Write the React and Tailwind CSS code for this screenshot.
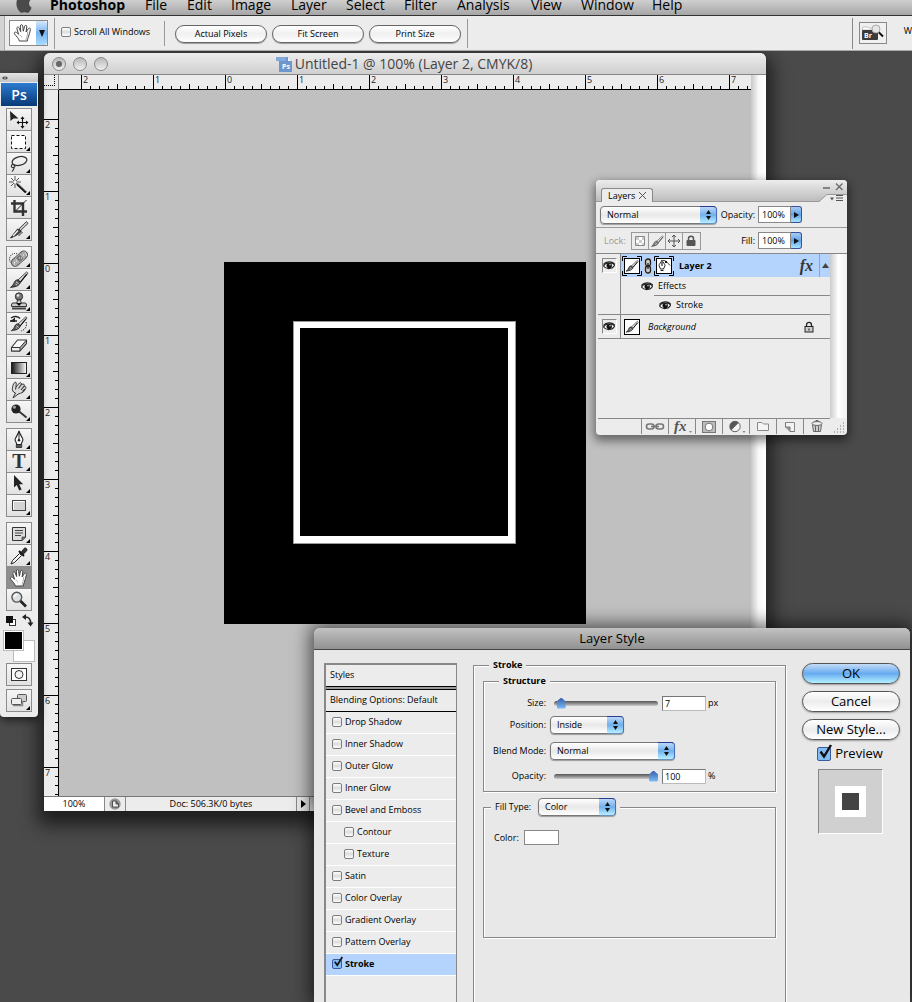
import { useState } from 'react'

const MENUS = [
  ['File', 'w-[42px]'],
  ['Edit', 'w-[44px]'],
  ['Image', 'w-[60px]'],
  ['Layer', 'w-[55px]'],
  ['Select', 'w-[58px]'],
  ['Filter', 'w-[53px]'],
  ['Analysis', 'w-[74px]'],
  ['View', 'w-[50px]'],
  ['Window', 'w-[71px]'],
  ['Help', 'w-[40px]'],
]

const STYLES = [
  { name: 'Drop Shadow' },
  { name: 'Inner Shadow' },
  { name: 'Outer Glow' },
  { name: 'Inner Glow' },
  { name: 'Bevel and Emboss' },
  { name: 'Contour', nested: true },
  { name: 'Texture', nested: true },
  { name: 'Satin' },
  { name: 'Color Overlay' },
  { name: 'Gradient Overlay' },
  { name: 'Pattern Overlay' },
  { name: 'Stroke' },
]

function HandShape() {
  return (
    <>
      <path
        d="M6.4 18 C5.8 15.6 3.4 13.4 1.4 10.8 C.8 9.4 2.4 8.5 3.5 9.4 L5.6 11.2 L3.8 5.6 C3.5 4 5.4 3.4 6.1 4.8 L7.7 8.6 L7.3 3 C7.3 1.4 9.4 1.2 9.7 2.8 L10.3 8.2 L11.6 3.2 C12 1.8 14 2.2 13.8 3.8 L13.1 9 L15.4 5.6 C16.2 4.4 17.9 5.2 17.4 6.7 C16.4 9.5 16.4 12 15.2 14.6 C14.6 16 14.4 16.6 14.4 18 Z"
        fill="#fff" stroke="#444" strokeWidth="1"
      />
      <path d="M14.8 8.5 C14.5 12 13.6 15 12.8 17.2 M6.5 12 C7.8 12.4 8.6 13.2 8.8 14.4" fill="none" stroke="#aaa" strokeWidth="1" />
    </>
  )
}

function BrushShape() {
  return (
    <>
      <path d="M17.5 2 L19 3.2 L11.5 12 L9 10 Z" fill="#ddd" stroke="#222" strokeWidth="0.8" />
      <path d="M17.8 4.2 L11.6 11.8" stroke="#111" strokeWidth="1.2" />
      <path d="M8.8 9.8 L11.6 12.2 L10.4 14.2 C8.2 17 4.4 16.8 1.5 17.5 C3.8 15.6 4.4 14.6 5.4 12.2 C6 10.8 7.4 9.8 8.8 9.8 Z" fill="#5a5a5a" stroke="#111" strokeWidth="0.8" />
      <path d="M7 11.8 L9.6 13.8 M6.5 14 L8 15" stroke="#ddd" strokeWidth="1" />
    </>
  )
}

const TOOL_ICONS = {
  move: (
    <>
      <path d="M1 1 L1.5 11 L4.5 8.6 L9.5 8.6 Z" fill="#222" />
      <path d="M13.5 7.5 V17.5 M8.5 12.5 H18.5" stroke="#111" strokeWidth="1.1" />
      <path d="M13.5 6.3 L11.5 9 H15.5 Z M13.5 18.7 L11.5 16 H15.5 Z M7.5 12.5 L10 10.5 V14.5 Z M19.5 12.5 L17 10.5 V14.5 Z" fill="#111" />
    </>
  ),
  marquee: <rect x="2.5" y="3.5" width="14" height="13" fill="#fff" stroke="#111" strokeDasharray="3 2" />,
  lasso: (
    <>
      <ellipse cx="10.5" cy="7" rx="7.5" ry="4.3" transform="rotate(-14 10.5 7)" fill="none" stroke="#333" strokeWidth="1.3" />
      <path d="M4 10 C1.5 11 2 13.8 4.4 13.6 C6.8 13.2 6 10.6 4.2 11 M5 13.5 C5.5 15 4 16 3 17.5" fill="none" stroke="#333" strokeWidth="1.2" />
    </>
  ),
  wand: (
    <>
      <path d="M6 0 V12 M0 6 H12 M2 2 L10 10 M10 2 L2 10" stroke="#555" strokeWidth="1" />
      <path d="M8 8 L17 16.5" stroke="#111" strokeWidth="2.4" />
      <path d="M9 7.8 L17 15.2" stroke="#aaa" strokeWidth="0.7" />
      <circle cx="6" cy="6" r="1.5" fill="#fff" />
    </>
  ),
  crop: (
    <>
      <path d="M5.5 2 V13.5 H18 M2 5.5 H14 V18" fill="none" stroke="#333" strokeWidth="2.4" />
      <path d="M6.5 13 L17.5 2" stroke="#222" strokeWidth="1" />
    </>
  ),
  slice: (
    <>
      <path d="M17.5 1.5 L19 3.5 L11.5 10.5 L9.8 9 Z" fill="#ccc" stroke="#222" strokeWidth="0.8" />
      <path d="M8.5 9 L12.5 11.2 C9 15 5 16.5 1.5 18 Z" fill="#444" stroke="#111" strokeWidth="0.7" />
      <path d="M9 10.5 L4 16" stroke="#eee" strokeWidth="1.4" />
      <path d="M13.5 12 L9.5 16" stroke="#111" strokeWidth="0.9" />
    </>
  ),
  heal: (
    <>
      <circle cx="6" cy="11" r="5.5" fill="none" stroke="#111" strokeDasharray="1 1.2" />
      <rect x="1" y="6.5" width="19" height="7.5" rx="3.7" transform="rotate(-42 11 10.5)" fill="#aaa" stroke="#555" />
      <rect x="8" y="7" width="6" height="6.5" transform="rotate(-42 11 10.5)" fill="#777" stroke="#ddd" strokeWidth="0.5" />
      <path d="M5 14.5 h1 M7 13 h1 M14 7 h1 M16 5 h1 M10 10 h1 M12 10 h1 M5 16 h1 M17 7 h1" stroke="#fff" />
    </>
  ),
  brush: <BrushShape />,
  stamp: (
    <>
      <circle cx="10" cy="4.5" r="3.7" fill="#777" stroke="#333" />
      <path d="M8.5 8 H11.5 L12.2 11 H16 Q17.5 11 17.5 13 V14.5 H2.5 V13 Q2.5 11 4 11 H7.8 Z" fill="#ccc" stroke="#333" />
      <path d="M7 11 H13 L10 14 Z" fill="#111" />
      <path d="M3 16.5 H17" stroke="#444" strokeWidth="2" />
      <circle cx="9" cy="3.5" r="1.3" fill="#eee" />
    </>
  ),
  history: (
    <>
      <g transform="translate(1 1) scale(.9)"><BrushShape /></g>
      <path d="M2 4 C5 1.8 9 2 11 4.5 M1 7 H8" fill="none" stroke="#222" strokeWidth="1.3" />
      <path d="M1 7.5 L6 3.5 L6 8 Z" fill="#222" />
      <path d="M17 8 C18.5 12 16 16 12 17" fill="none" stroke="#222" strokeDasharray="1.5 1.2" />
    </>
  ),
  eraser: (
    <>
      <path d="M8.5 4 H17.5 V7.5 L11 15 H2.5 V11.5 Z" fill="#fafafa" stroke="#333" strokeWidth="1.1" strokeLinejoin="round" />
      <path d="M2.5 11.5 H11 L17.5 4 V7.5 L11 15 Z" fill="#aaa" stroke="#333" strokeWidth="1" strokeLinejoin="round" />
      <path d="M2.5 11.5 H11 V15 H2.5 Z" fill="#eee" stroke="#333" strokeWidth="1" />
    </>
  ),
  gradient: (
    <>
      <defs>
        <linearGradient id="toolGradient">
          <stop offset="0" stopColor="#111" />
          <stop offset="1" stopColor="#fff" />
        </linearGradient>
      </defs>
      <rect x="2.5" y="4.5" width="15" height="11" fill="url(#toolGradient)" stroke="#222" />
    </>
  ),
  smudge: (
    <>
      <path d="M4 18 L6.5 13 C4 12.5 2.8 10 3.5 7.5 C4 4.5 5 2.5 6.5 2 C8 3 6.8 5.5 7 7 L10.5 3 C12 2.2 13 3.3 12.2 4.7 L14 4 C15.4 4 15.6 5.4 14.9 6.4 L16.2 6.3 C17.4 7 17 8.3 16.2 9.3 C15.5 11 13.8 13 11.5 13.2 L9 14.2 Z" fill="#ddd" stroke="#333" strokeWidth="1" />
      <path d="M12.2 4.7 L9.5 8.5 M14.9 6.4 L12 10 M16 9 L13.5 11.5 M7 7 L6.5 9.5" stroke="#333" strokeWidth="1.1" />
    </>
  ),
  dodge: (
    <>
      <path d="M9.5 9 L17.5 15.5" stroke="#333" strokeWidth="1.8" />
      <circle cx="7" cy="7" r="4.6" fill="#222" />
      <circle cx="5.4" cy="5.2" r="1.6" fill="#999" />
    </>
  ),
  pen: (
    <>
      <path d="M10 1 C11 5 14 8 14 10 L12 14.5 H8 L6 10 C6 8 9 5 10 1 Z" fill="#fff" stroke="#222" strokeWidth="1.1" />
      <path d="M10 3 V10" stroke="#222" />
      <circle cx="10" cy="10.3" r="1.3" fill="#222" />
      <path d="M7.3 14.5 H12.7 V17.5 H7.3 Z" fill="#555" stroke="#222" strokeWidth="0.8" />
    </>
  ),
  type: <text x="10" y="16" textAnchor="middle" className="fill-[#333] font-['Liberation_Serif',serif] text-[20px] font-bold">T</text>,
  select: <path d="M5 1 L5 13.500 L7.8 11 L10.2 16.5 L12.6 15.5 L10.2 10.2 H14.2 Z" fill="#222" />,
  shape: (
    <>
      <rect x="3.5" y="4.5" width="13" height="10" fill="#d4d4d4" stroke="#444" />
      <path d="M4.5 13.5 V5.5 H15.5" fill="none" stroke="#fff" />
    </>
  ),
  notes: (
    <>
      <path d="M3.5 3.5 H16.5 V13 L13 16.5 H3.5 Z" fill="#ddd" stroke="#333" />
      <path d="M16.5 13 H13 V16.5 Z" fill="#888" stroke="#333" strokeWidth="0.7" />
      <path d="M6 6.5 H14 M6 9 H14 M6 11.5 H12" stroke="#444" />
    </>
  ),
  dropper: (
    <>
      <path d="M2 18 L3.5 14.5 L10.5 7.5 L12.5 9.5 L5.5 16.5 Z" fill="#f4f4f4" stroke="#222" strokeWidth="1" />
      <path d="M10 5 L15 10" stroke="#111" strokeWidth="2" />
      <path d="M12 6.5 L15 2.5 C16.5 1 19 3 17.6 5 L14 8.5 Z" fill="#333" stroke="#111" strokeWidth="0.8" />
    </>
  ),
  hand: <HandShape />,
  zoom: (
    <>
      <path d="M11 10.5 L17 16.5" stroke="#222" strokeWidth="2.6" />
      <circle cx="7.8" cy="7.2" r="4.9" fill="#dde1e3" stroke="#555" strokeWidth="1.4" />
      <path d="M5.2 7 C5.6 5.3 6.8 4.5 8.2 4.5" fill="none" stroke="#fff" strokeWidth="1.4" />
    </>
  ),
  mask: (
    <>
      <rect x="2.5" y="3.5" width="15" height="12" fill="#fff" stroke="#333" />
      <circle cx="10" cy="9.5" r="4" fill="#f4f4f4" stroke="#333" />
    </>
  ),
  screen: (
    <>
      <rect x="8.5" y="3.5" width="9" height="7" rx="1" fill="#ccc" stroke="#555" />
      <path d="M4 14.500 H13.500 V10" fill="none" stroke="#888" strokeWidth="1.5" />
      <rect x="2.5" y="7.5" width="10" height="6" rx="1" fill="#f0f0f0" stroke="#555" />
    </>
  ),
}

const TOOL_GROUPS = [
  [['move'], ['marquee', 1], ['lasso', 1], ['wand', 1], ['crop'], ['slice', 1]],
  [['heal', 1], ['brush', 1], ['stamp', 1], ['history', 1], ['eraser', 1], ['gradient', 1], ['smudge', 1], ['dodge', 1]],
  [['pen', 1], ['type', 1], ['select', 1], ['shape', 1]],
  [['notes', 1], ['dropper', 1], ['hand'], ['zoom']],
]

function ToolGroup({ tools, active, onPick }) {
  return (
    <div className="w-[26px] border-x border-t border-[#8c8c8c]">
      {tools.map(([name, more]) => (
        <button
          key={name}
          type="button"
          aria-label={name}
          onClick={() => onPick(name)}
          className={`relative flex h-[22px] w-full items-center justify-center border-b border-[#8c8c8c] ${
            active === name ? 'bg-[#8e8e8e]' : 'bg-linear-to-b from-[#f6f6f6] to-[#e2e2e2]'
          }`}
        >
          <svg viewBox="0 0 20 20" className="size-5" fill="none">{TOOL_ICONS[name]}</svg>
          {more && (
            <svg viewBox="0 0 4 4" className="absolute right-px bottom-px size-1"><path d="M4 0 V4 H0 Z" fill="#000" /></svg>
          )}
        </button>
      ))}
    </div>
  )
}

function Toolbox() {
  const [active, setActive] = useState('hand')

  return (
    <aside className="absolute top-[22px] left-0 flex w-[38px] flex-col items-center rounded-b-sm bg-[#ececec] pb-[5px] shadow-[1px_3px_8px_#0009]">
      <div className="flex h-[9px] w-full items-center bg-linear-to-b from-[#e4e4e4] to-[#c4c4c4] pl-0.5">
        <svg viewBox="0 0 6 4" className="h-1 w-1.5"><path d="M2.5 0 V4 L0 2 Z M3.5 0 V4 L6 2 Z" fill="#444" /></svg>
      </div>
      <div className="mt-px mb-0.5 flex h-[23px] w-9 items-center justify-center bg-linear-to-b from-[#2c7bd0] to-[#083a78] text-sm font-semibold text-white">
        Ps
      </div>
      <div className="flex flex-col gap-[5px]">
        {TOOL_GROUPS.map((tools) => (
          <ToolGroup key={tools[0][0]} tools={tools} active={active} onPick={setActive} />
        ))}
      </div>
      <svg viewBox="0 0 36 52" className="h-[52px] w-9">
        <rect x="8.5" y="8.5" width="6" height="6" fill="#fff" stroke="#333" />
        <rect x="5" y="5" width="7" height="7" fill="#111" />
        <path d="M23 6 C28 5.500 30 8 29.500 13" fill="none" stroke="#222" strokeWidth="1.500" />
        <path d="M21 6 L25 3 V9 Z M29.500 15.500 L26.500 11.500 H32.500 Z" fill="#222" />
        <rect x="12.5" y="29.500" width="21" height="21" fill="#fff" stroke="#bbb" />
        <rect x="2.500" y="19.500" width="20" height="20" fill="#fff" stroke="#bbb" />
        <rect x="4" y="21" width="17" height="17" fill="#000" />
      </svg>
      <div className="flex flex-col gap-[3px]">
        <ToolGroup tools={[['mask']]} active={active} onPick={setActive} />
        <ToolGroup tools={[['screen', 1]]} active={active} onPick={setActive} />
      </div>
    </aside>
  )
}

function Check({ checked, onChange, large = false }) {
  return (
    <span className={`relative inline-flex shrink-0 ${large ? 'size-[14px]' : 'size-[10px]'}`}>
      <input
        type="checkbox"
        checked={checked}
        onChange={onChange}
        className="size-full appearance-none rounded-[2px] border border-[#7d7d7d] bg-linear-to-b from-white via-[#dcdcdc] to-white checked:border-[#3c5a9c] checked:bg-none checked:bg-[#83bdf5]"
      />
      {checked && (
        <svg viewBox="0 0 14 14" className="pointer-events-none absolute -top-0.5 left-px size-full overflow-visible">
          <path d="M2.5 6.5 L6 11.5 L13 0" fill="none" stroke="#111" strokeWidth="2.4" />
        </svg>
      )}
    </span>
  )
}

function Dropdown({ id, label, options, className }) {
  return (
    <span className={`relative inline-flex h-[18px] ${className}`}>
      <select
        id={id}
        aria-label={label}
        className="h-full w-full appearance-none rounded-[4px] border border-[#777] bg-linear-to-b from-white via-[#e8e8e8] to-white pl-1.5 text-[9px] leading-4 shadow-[0_1px_1px_#0005] outline-none"
      >
        {options.map((o) => <option key={o}>{o}</option>)}
      </select>
      <span className="pointer-events-none absolute inset-y-0 right-0 flex w-[17px] items-center justify-center rounded-r-[4px] border border-l-0 border-t-[#2b3a94] border-r-[#4a6fb8] border-b-[#6a8fc0] bg-linear-to-b from-[#bcd8f8] via-[#6fb0ee] to-[#b8f0ff]">
        <svg viewBox="0 0 5 10" className="h-2.5 w-[5px]"><path d="M2.5 0 L5 4 H0 Z M2.5 10 L0 6 H5 Z" fill="#111" /></svg>
      </span>
    </span>
  )
}

function PercentField({ label }) {
  return (
    <label className="flex items-center justify-end">
      <span className="mr-[3px]">{label}</span>
      <input defaultValue="100%" className="h-[17px] w-[33px] border border-[#888] bg-white px-[3px] text-[9px] outline-none" />
      <span className="flex h-[17px] w-[11px] items-center justify-center rounded-r-[3px] border border-l-0 border-[#3a4fa0] bg-linear-to-b from-[#a8ccf4] via-[#5fa4ea] to-[#a8e4ff]">
        <svg viewBox="0 0 5 6" className="h-1.5 w-[5px]"><path d="M0 0 L5 3 L0 6 Z" fill="#111" /></svg>
      </span>
    </label>
  )
}

function MenuBar() {
  return (
    <nav className="flex h-4 shrink-0 border-b border-[#333] bg-linear-to-b from-[#cfcfcf] to-[#a6a6a6] pl-[15px] text-sm leading-[10px]">
      <svg viewBox="0 0 18 14" className="h-3.5 w-[35px] shrink-0" preserveAspectRatio="xMinYMin">
        <path d="M2 0 C.5 4 2 9 5 12 C6.5 13.6 8 12.4 9.3 12.2 C11 12 12 13.6 13.6 12.4 C15 11.4 16 9.5 16.6 7.6 C13.5 6 13.5 2 15.5 0 Z" fill="#4a4a4a" />
      </svg>
      <button type="button" className="flex w-[95px] shrink-0 font-bold">Photoshop</button>
      {MENUS.map(([name, width]) => (
        <button key={name} type="button" className={`flex shrink-0 font-medium ${width}`}>{name}</button>
      ))}
    </nav>
  )
}

function OptionsBar() {
  const [scrollAll, setScrollAll] = useState(false)

  return (
    <div className="flex h-[35px] shrink-0 items-center overflow-hidden border-b border-[#aaa] bg-[#ececec] text-[9px]">
      <span className="h-full w-[5px] border-r border-[#aaa] bg-[#d4d4d4]" />
      <button type="button" aria-label="Hand tool" className="ml-1 flex h-[26px] w-[39px] shrink-0 border border-[#888] bg-white">
        <svg viewBox="0 0 20 20" className="mx-[3px] mt-0.5 size-5"><HandShape /></svg>
        <span className="flex h-full flex-1 items-center justify-center rounded-r-[3px] bg-linear-to-b from-[#d5e8fb] via-[#77b4f0] to-[#a9dcff]">
          <svg viewBox="0 0 6 7" className="h-[7px] w-1.5"><path d="M0 0 H6 L3 7 Z" fill="#111" /></svg>
        </span>
      </button>
      <span className="ml-1.5 h-[31px] w-px bg-[#999]" />
      <label className="ml-1.5 flex w-[103px] shrink-0 items-center gap-[3px] pb-0.5">
        <Check checked={scrollAll} onChange={() => setScrollAll(!scrollAll)} />
        Scroll All Windows
      </label>
      <span className="h-[25px] w-px bg-[#999]" />
      <div className="ml-2.5 flex gap-[5px] pt-0.5">
        {['Actual Pixels', 'Fit Screen', 'Print Size'].map((name) => (
          <button key={name} type="button" className="h-[18px] w-[92px] rounded-full border border-[#666] bg-linear-to-b from-white via-[#f0f0f0] to-white leading-4 shadow-[0_1px_1px_#0005]">
            {name}
          </button>
        ))}
      </div>
      <span className="ml-1.5 h-[29px] w-px bg-[#999]" />
      <span className="ml-auto h-[31px] w-px bg-[#888]" />
      <button type="button" aria-label="Bridge" className="mx-1.5 flex h-[22px] w-7 shrink-0 items-center justify-center border border-[#888] bg-[#f0f0f0]">
        <svg viewBox="0 0 24 18" className="h-[18px] w-6">
          <path d="M1 6 L2 3 H7 L8 4 H14 V6 Z" fill="#fff" stroke="#aaa" strokeWidth="0.7" />
          <rect x="1" y="6" width="16" height="10" rx="1" fill="#3a3a3a" />
          <text x="3" y="14" className="fill-white text-[7px] font-bold">Br</text>
          <path d="M17.500 8 L22 12.500" stroke="#111" strokeWidth="2" />
          <circle cx="15" cy="5" r="4" fill="#e6e6e6" stroke="#aaa" />
        </svg>
      </button>
      <span className="ml-[11px] shrink-0 pb-1">W</span>
    </div>
  )
}

// 72px to the inch, eight ticks per inch
function Ruler({ vertical = false, origin, from, to }) {
  const marks = []
  for (let i = from * 8; i <= to * 8 + 4; i++) {
    const at = origin + i * 9
    const size = i % 8 === 0 ? 15 : i % 4 === 0 ? 6 : 4
    if (at < 0) continue
    marks.push(
      vertical
        ? <path key={i} d={`M${15 - size} ${at + 0.5} H15`} />
        : <path key={i} d={`M${at + 0.5} ${15 - size} V15`} />
    )
  }
  const labels = []
  for (let n = from; n <= to; n++) {
    const at = origin + n * 72
    labels.push(
      <text key={n} x={vertical ? 1 : at + 2} y={vertical ? at + 9 : 8} className="fill-[#222] text-[9px] font-medium">
        {Math.abs(n)}
      </text>
    )
  }
  return (
    <svg className={vertical ? 'h-full w-[15px] shrink-0 border-r border-black bg-[#ececec]' : 'h-[15px] min-w-0 flex-1 overflow-visible border-b border-black bg-[#ececec]'}>
      <g stroke="#000" strokeWidth="1">{marks}</g>
      {labels}
    </svg>
  )
}

function DocumentWindow() {
  return (
    <section className="absolute top-0.5 right-[146px] bottom-[191px] left-11 flex flex-col overflow-hidden rounded-t-md bg-[#c0c0c0] shadow-[0_8px_18px_6px_#0009]">
      <header className="relative flex h-[22px] shrink-0 items-center justify-center border-b border-[#888] bg-linear-to-b from-[#ededed] to-[#cfcfcf] pr-0.5 text-sm text-[#444]">
        <div className="absolute left-2 flex gap-[7px]">
          {['Close', 'Minimize', 'Zoom'].map((name, i) => (
            <button key={name} type="button" aria-label={name} className="flex size-3.5 items-center justify-center rounded-full border border-[#888] bg-linear-to-b from-[#b8b8b8] to-[#f0f0f0]">
              {i === 0 && <span className="size-1.5 rounded-full bg-[#666]" />}
            </button>
          ))}
        </div>
        <svg viewBox="0 0 16 16" className="mr-[3px] size-4">
          <path d="M3 1 H12 L16 5 V16 H3 Z" fill="#6f96cc" />
          <path d="M12 1 V5 H16 Z" fill="#f3f6fb" />
          <rect x="0" y="1" width="10" height="4" fill="#83a9da" />
          <text x="6" y="13" className="fill-white text-[7px] font-bold">Ps</text>
        </svg>
        Untitled-1 @ 100% (Layer 2, CMYK/8)
      </header>

      <div className="flex min-h-0 flex-1">
        <div className="flex min-w-0 flex-1 flex-col">
          <div className="flex h-[15px] shrink-0 overflow-hidden">
            <div className="h-[15px] w-[15px] border-r border-b border-[#888] bg-[#ececec] pr-[3px] pb-[3px]">
              <div className="h-full w-full border-r border-b border-dotted border-black" />
            </div>
            <Ruler origin={166} from={-2} to={7} />
          </div>
          <div className="flex min-h-0 flex-1 overflow-hidden">
            <Ruler vertical origin={173} from={-2} to={7} />
            <div className="min-w-0 flex-1 pt-[172px] pl-[165px]">
              <div className="size-[362px] bg-black pt-[59px] pl-[69px]">
                <div className="size-[223px] border border-[#999] bg-white pt-1.5 pr-[7px] pb-[7px] pl-1.5">
                  <div className="h-full w-full bg-black" />
                </div>
              </div>
            </div>
          </div>
        </div>
        <div className="w-[15px] bg-linear-to-r from-[#c8c8c8] via-[#f8f8f8] to-white" />
      </div>

      <footer className="flex h-[15px] shrink-0 border-t border-[#777] bg-[#ececec] text-[9px] leading-[13px]">
        <span className="w-[61px] border-r border-[#888] bg-white text-center">100%</span>
        <span className="flex w-[21px] items-center justify-center border-r border-[#888]">
          <svg viewBox="0 0 12 12" className="size-3">
            <circle cx="6" cy="6" r="5.7" fill="#999" />
            <path d="M3.5 3 H7 L9.5 6 V9 H3.5 Z M7 3 V6 H9.5" fill="#eee" stroke="#333" strokeWidth="0.8" />
          </svg>
        </span>
        <span className="w-[170px] text-center">Doc: 506.3K/0 bytes</span>
        <button type="button" aria-label="Status menu" className="flex w-[14px] items-center justify-center border-x border-[#888]">
          <svg viewBox="0 0 5 8" className="h-2 w-[5px]"><path d="M0 0 L5 4 L0 8 Z" fill="#000" /></svg>
        </button>
        <span className="flex-1 bg-linear-to-b from-[#ccc] to-white" />
      </footer>
    </section>
  )
}

function Eye() {
  return (
    <svg viewBox="0 0 12 9" className="h-[9px] w-3">
      <path d="M.5 5 C2.5 1.5 9 1 11.6 4 C9.5 8.6 3 8.600 .5 5 Z" fill="#fff" stroke="#222" strokeWidth="1.1" />
      <path d="M.3 3.5 C3 0 9 0 11.7 3" fill="none" stroke="#222" strokeWidth="1.200" />
      <circle cx="6.2" cy="4.6" r="2.700" fill="#111" />
      <circle cx="7" cy="3.8" r="0.7" fill="#fff" />
    </svg>
  )
}

function LayerIcon({ pen = false, selected = false }) {
  return (
    <svg viewBox="0 0 20 20" className="size-5 shrink-0">
      {selected && <path d="M.5 5 V.5 H5 M15 .5 H19.5 V5 M19.5 15 V19.5 H15 M5 19.5 H.5 V15" fill="none" stroke="#000" />}
      <rect x="2.5" y="2.5" width="15" height="15" fill="#fff" stroke="#000" />
      {pen ? (
        <>
          <path d="M8 4 C8.8 6.500 11 8 11 9.5 L9.5 13 H6.5 L5 9.500 C5 8 7.200 6.500 8 4 Z" fill="#fff" stroke="#222" />
          <path d="M8 6 V10 M6.500 14.500 H9.500" stroke="#222" strokeWidth="1.200" />
          <path d="M9 4.500 C11 4 13 6 16 9.500" fill="none" stroke="#222" />
          <rect x="11" y="5" width="2" height="2" fill="#111" />
        </>
      ) : (
        <g transform="translate(3 3) scale(.7)"><BrushShape /></g>
      )}
    </svg>
  )
}

function LockIcon({ className }) {
  return (
    <svg viewBox="0 0 10 12" className={className}>
      <path d="M2.5 6 V4 C2.5 .5 7.5 .5 7.5 4 V6" fill="none" stroke="#222" strokeWidth="1.3" />
      <rect x="1" y="5.5" width="8" height="5.5" fill="#ccc" stroke="#222" />
      <path d="M5 7.5 V9.5" stroke="#111" />
    </svg>
  )
}

const LOCKS = [
  <g key="px"><path d="M3.5 3.5 H12.5 V12.5 H3.5 Z" fill="#fff" stroke="#888" /><path d="M4 4 h3 v3 h-3 Z M10 4 h2 v3 h-2 Z M7 7 h3 v3 h-3 Z M4 10 h3 v2 h-3 Z M10 10 h2 v2 h-2 Z" fill="#ccc" /></g>,
  <g key="paint" transform="translate(1.5 1.5) scale(.68)" opacity=".8"><BrushShape /></g>,
  <path key="move" d="M8 2 V14 M2 8 H14 M6 4 L8 2 L10 4 M6 12 L8 14 L10 12 M4 6 L2 8 L4 10 M12 6 L14 8 L12 10" fill="none" stroke="#555" />,
  <g key="all"><path d="M5.5 8 V5.5 C5.5 2.5 10.5 2.5 10.5 5.5 V8" fill="none" stroke="#555" strokeWidth="1.5" /><rect x="3.5" y="7" width="9" height="6" rx="1" fill="#555" /></g>,
]

const LAYER_ACTIONS = [
  ['Link', <g key="i" fill="none" stroke="#777" strokeWidth="1.6"><rect x="1.500" y="5" width="7.500" height="5" rx="2.5" /><rect x="11" y="5" width="7.500" height="5" rx="2.5" /><path d="M6 7.500 H14" /></g>],
  ['Effects', <g key="i"><text x="2" y="12" className="fill-[#555] font-['Liberation_Serif',serif] text-[15px] font-bold italic">fx</text><path d="M17 12 h3 l-1.5 2 Z" fill="#888" /></g>],
  ['Mask', <g key="i"><rect x="3.5" y="2.5" width="13" height="11" fill="#bbb" stroke="#777" /><circle cx="10" cy="8" r="3.8" fill="#fff" stroke="#777" /></g>],
  ['Adjustment', <g key="i"><circle cx="9" cy="7.5" r="5.2" fill="#f4f4f4" stroke="#666" /><path d="M12.7 3.8 A5.2 5.2 0 1 0 5.3 11.2 Z" fill="#555" /><path d="M16.500 12 h3 l-1.5 2 Z" fill="#888" /></g>],
  ['Group', <path key="i" d="M4.5 11.5 V3.5 H9 L10.5 5 H15.5 V11.5 Z" fill="#f4f4f4" stroke="#888" />],
  ['New', <g key="i"><path d="M5.5 3.5 H14.5 V12.5 H10 L5.5 8 Z" fill="#f4f4f4" stroke="#888" /><path d="M5.500 3.500 V8 H10 V12.5 H14.500" fill="none" stroke="#777" /><path d="M6 8 H10 V12 Z" fill="#888" /></g>],
  ['Delete', <g key="i" fill="none" stroke="#666"><path d="M5.5 5.5 L6.5 12.5 H13.5 L14.5 5.5 Z" fill="#ccc" /><ellipse cx="10" cy="4.5" rx="5" ry="2" fill="#eee" /><path d="M8.5 7 V12 M11.5 7 V12 M8 2.5 C8.5 1 11.5 1 12 2.5" /></g>],
]

function EyeBox() {
  return (
    <span className="flex w-[23px] shrink-0 items-center justify-center border-r border-[#888] bg-[#ececec]">
      <button type="button" aria-label="Visibility" className="flex size-[15px] items-center justify-center border border-t-[#888] border-r-white border-b-white border-l-[#888]"><Eye /></button>
    </span>
  )
}

function LayersPanel() {
  return (
    <section className="absolute top-[129px] right-[65px] flex h-[255px] w-[251px] flex-col rounded-sm bg-[#ececec] text-[9px] shadow-[0_4px_10px_2px_#0007]">
      <header className="flex h-[22px] shrink-0 items-end rounded-t-sm border-b border-[#999] bg-linear-to-b from-[#ededed] to-[#bdbdbd] pl-[5px]">
        <div className="-mb-px flex h-[14px] w-[52px] items-center gap-1 rounded-t-[3px] border border-b-0 border-[#888] bg-[#ececec] pl-1.5">
          Layers
          <svg viewBox="0 0 7 7" className="size-[7px]"><path d="M0 0 L7 7 M7 0 L0 7" stroke="#555" /></svg>
        </div>
        <svg viewBox="0 0 28 20" className="-mb-px ml-auto h-5 w-7">
          <path d="M0 20 L8 12 H28 V20 Z" fill="#ececec" />
          <path d="M0 19.5 L8 12.5 H28" fill="none" stroke="#999" />
          <path d="M4 6 H11" stroke="#666" strokeWidth="1.5" />
          <path d="M17 1.500 L23.500 8 M23.500 1.500 L17 8" stroke="#666" strokeWidth="1.2" />
          <path d="M11 15.5 H15 L13 18.5 Z" fill="#555" />
          <path d="M17 13.500 H24 M17 16 H24 M17 18.500 H24" stroke="#555" />
        </svg>
      </header>

      <div className="flex h-[26px] shrink-0 items-center border-b border-[#999] px-1">
        <Dropdown label="Blending mode" options={['Normal', 'Dissolve', 'Multiply', 'Screen']} className="w-[117px]" />
        <div className="ml-0.5 w-[83px]"><PercentField label="Opacity:" /></div>
      </div>
      <div className="flex h-[26px] shrink-0 items-center border-b border-[#888] pl-2">
        <span className="w-[27px] text-[#999]">Lock:</span>
        <div className="flex border border-[#999]">
          {LOCKS.map((icon, i) => (
            <button key={i} type="button" aria-label={`Lock ${i + 1}`} className="h-4 w-[17px] border-r border-[#999] last:border-r-0">
              <svg viewBox="0 0 16 16" className="size-4">{icon}</svg>
            </button>
          ))}
        </div>
        <div className="ml-auto mr-[45px]"><PercentField label="Fill:" /></div>
      </div>

      <div className="flex min-h-0 flex-1 pl-0.5">
        <div className="flex min-w-0 flex-1 flex-col">
          <div className="flex h-[23px] shrink-0 bg-[#b4d4fe]">
            <EyeBox />
            <div className="flex flex-1 items-center pl-px">
              <LayerIcon selected />
              <svg viewBox="0 0 10 16" className="mx-px h-4 w-2.5">
                <rect x="1" y="0" width="8" height="16" rx="3" fill="#ccc" />
                <g fill="none" stroke="#222" strokeWidth="1.3"><rect x="2.5" y="1" width="5" height="7" rx="2.5" /><rect x="2.5" y="8" width="5" height="7" rx="2.5" /><path d="M5 5 V11" /></g>
              </svg>
              <LayerIcon pen selected />
              <b className="ml-[5px]">Layer 2</b>
              <span className="mr-1.5 ml-auto font-['Liberation_Serif',serif] text-[16px] leading-4 font-bold text-[#333] italic">fx</span>
              <span className="flex h-full w-[11px] items-center justify-center border-l border-[#8aa4c6]">
                <svg viewBox="0 0 7 5" className="h-[5px] w-[7px]"><path d="M0 5 L3.5 0 L7 5 Z" fill="#444" /></svg>
              </span>
            </div>
          </div>
          <div className="flex h-[38px] shrink-0 border-b border-[#888]">
            <span className="w-[23px] border-r border-[#888]" />
            <div className="flex flex-1 flex-col pl-5">
              <div className="flex h-[18px] items-center gap-[5px]"><Eye />Effects</div>
              <div className="ml-[13px] flex flex-1 items-center gap-[5px] border-t border-[#888] pl-[5px]"><Eye />Stroke</div>
            </div>
          </div>
          <div className="flex h-6 shrink-0 border-b border-[#888]">
            <EyeBox />
            <div className="flex flex-1 items-center pl-px">
              <LayerIcon />
              <i className="ml-1.5">Background</i>
              <LockIcon className="mr-4 ml-auto h-3 w-2.5" />
            </div>
          </div>
        </div>
        <div className="w-[17px] bg-linear-to-r from-[#ccc] via-white to-[#f0f0f0]" />
      </div>

      <footer className="flex h-[17px] shrink-0 pb-px pl-0.5">
        <div className="flex flex-1 justify-end border-t border-[#888]">
          {LAYER_ACTIONS.map(([name, icon]) => (
            <button key={name} type="button" aria-label={name} className="flex w-[27px] items-center justify-center border-l border-[#888]">
              <svg viewBox="0 0 20 16" className="h-4 w-5">{icon}</svg>
            </button>
          ))}
        </div>
        <svg viewBox="0 0 17 16" className="h-4 w-[17px]">
          <path d="M13 5 h1 M10 8 h1 M13 8 h1 M7 11 h1 M10 11 h1 M13 11 h1 M4 14 h1 M7 14 h1 M10 14 h1 M13 14 h1" stroke="#777" />
        </svg>
      </footer>
    </section>
  )
}

function SliderRow({ label, max, initial, unit }) {
  const [value, setValue] = useState(initial)

  return (
    <div className="flex h-4 items-center">
      <label htmlFor={label} className="w-[66px] pr-1 text-right">{label}:</label>
      <input
        id={label}
        type="range"
        min="0"
        max={max}
        value={value}
        onChange={(e) => setValue(e.target.value)}
        className="mx-1 h-[5px] w-[104px] shrink-0 appearance-none rounded-full bg-linear-to-b from-[#555] to-[#ccc] [&::-webkit-slider-thumb]:h-[11px] [&::-webkit-slider-thumb]:w-[9px] [&::-webkit-slider-thumb]:appearance-none [&::-webkit-slider-thumb]:bg-linear-to-b [&::-webkit-slider-thumb]:from-[#3a5fae] [&::-webkit-slider-thumb]:to-[#7fc0f8] [&::-webkit-slider-thumb]:[clip-path:polygon(50%_0,100%_35%,100%_90%,85%_100%,15%_100%,0_90%,0_35%)]"
      />
      <input
        aria-label={`${label} value`}
        value={value}
        onChange={(e) => setValue(e.target.value)}
        className="h-[15px] w-11 border border-t-[#777] border-r-[#bbb] border-b-[#bbb] border-l-[#777] bg-white px-0.5 text-[9px] outline-none"
      />
      <span className="ml-0.5">{unit}</span>
    </div>
  )
}

function SelectRow({ id, label, options, className }) {
  return (
    <div className="flex items-center">
      <label htmlFor={id} className="w-[66px] pr-1 text-right whitespace-nowrap">{label}</label>
      <Dropdown id={id} label={label} options={options} className={className} />
    </div>
  )
}

const GROUP = 'border border-[#888] shadow-[1px_1px_0_#fff,inset_1px_1px_0_#fff]'

function LayerStyleDialog() {
  const [enabled, setEnabled] = useState({ Stroke: true })
  const [preview, setPreview] = useState(true)
  const pill = 'h-[21px] w-full rounded-full border border-[#555] text-[13px] leading-[19px] shadow-[0_1px_2px_#0005]'

  return (
    <section role="dialog" aria-label="Layer Style" className="absolute top-[577px] right-0.5 bottom-0 flex w-[596px] flex-col overflow-hidden rounded-t-md bg-[#e8e8e8] text-[9px] shadow-[0_0_18px_4px_#0009]">
      <header className="h-[22px] shrink-0 border-b border-[#444] bg-linear-to-b from-[#c2c2c2] to-[#929292] text-center text-[13px] leading-5">
        Layer Style
      </header>

      <div className="flex min-h-0 flex-1 pr-2.5 pl-2.5">
        <div className="mt-[13px] w-[133px] shrink-0 border-t-2 border-r border-l-2 border-[#888] bg-[#ececec]">
          <div className="h-[21px] pl-1 leading-5">Styles</div>
          <div className="h-1 border-y border-black bg-[#999]" />
          <div className="h-[22px] border-b border-black pl-1 leading-5 whitespace-nowrap">Blending Options: Default</div>
          {STYLES.map(({ name, nested }) => (
            <label
              key={name}
              className={`flex h-[22px] items-center gap-[3px] border-b border-white pb-px whitespace-nowrap ${nested ? 'pl-[18px]' : 'pl-1.5'} ${
                enabled[name] ? 'bg-[#b4d4fe] font-bold' : ''
              }`}
            >
              <Check checked={Boolean(enabled[name])} onChange={() => setEnabled({ ...enabled, [name]: !enabled[name] })} />
              {name}
            </label>
          ))}
        </div>

        <fieldset className={`mt-[9px] ml-4 -mb-1 w-[313px] min-w-0 shrink-0 px-[9px] ${GROUP}`}>
          <legend className="ml-1.5 bg-[#e8e8e8] px-1 leading-3 font-bold">Stroke</legend>

          <fieldset className={`mt-1 h-[117px] ${GROUP}`}>
            <legend className="ml-[15px] bg-[#e8e8e8] px-1 leading-3 font-bold">Structure</legend>
            <div className="flex flex-col pt-2">
              <SliderRow label="Size" max="250" initial="7" unit="px" />
              <div className="mt-[5px] mb-2">
                <SelectRow id="position" label="Position:" options={['Inside', 'Outside', 'Center']} className="w-[74px]" />
              </div>
              <div className="mb-2">
                <SelectRow id="blend" label="Blend Mode:" options={['Normal', 'Multiply', 'Screen']} className="w-[125px]" />
              </div>
              <SliderRow label="Opacity" max="100" initial="100" unit="%" />
            </div>
          </fieldset>

          <fieldset className={`mt-[6px] h-[140px] ${GROUP}`}>
            <legend className="ml-[7px] flex items-center bg-[#e8e8e8] px-1">
              <label htmlFor="fill" className="w-[43px] whitespace-nowrap">Fill Type:</label>
              <Dropdown id="fill" label="Fill Type" options={['Color', 'Gradient', 'Pattern']} className="w-[78px]" />
            </legend>
            <div className="flex items-center pt-3.5 pl-2.5">
              <span className="w-[30px]">Color:</span>
              <button type="button" aria-label="Stroke color" className="h-[15px] w-[35px] border border-[#888] bg-white" />
            </div>
          </fieldset>
        </fieldset>

        <div className="ml-auto flex w-[98px] shrink-0 flex-col items-center pt-[13px]">
          <div className="flex w-full flex-col gap-[7px]">
            <button type="button" className={`bg-linear-to-b from-[#c4dcf6] via-[#66aaf0] to-[#b4f0ff] ${pill}`}>OK</button>
            <button type="button" className={`bg-linear-to-b from-white via-[#ececec] to-white ${pill}`}>Cancel</button>
            <button type="button" className={`bg-linear-to-b from-white via-[#ececec] to-white ${pill}`}>New Style...</button>
          </div>
          <label className="mt-1 flex h-5 items-center gap-1 pr-0.5 text-[13px]">
            <Check large checked={preview} onChange={() => setPreview(!preview)} />
            Preview
          </label>
          <div className="mt-[5px] mr-px flex size-[65px] items-center justify-center border border-t-[#888] border-r-white border-b-white border-l-[#888] bg-[#d0d0d0]">
            <div className="size-[31px] border-[7px] border-white bg-[#444]" />
          </div>
        </div>
      </div>
    </section>
  )
}

export default function App() {
  return (
    <main className="flex h-screen w-full flex-col overflow-hidden bg-[#4a4a4a] font-['Open_Sans','Noto_Sans',sans-serif] font-medium text-black">
      <MenuBar />
      <OptionsBar />
      <div className="relative min-h-0 flex-1 overflow-hidden">
        <DocumentWindow />
        <Toolbox />
        <LayersPanel />
        <LayerStyleDialog />
      </div>
    </main>
  )
}
